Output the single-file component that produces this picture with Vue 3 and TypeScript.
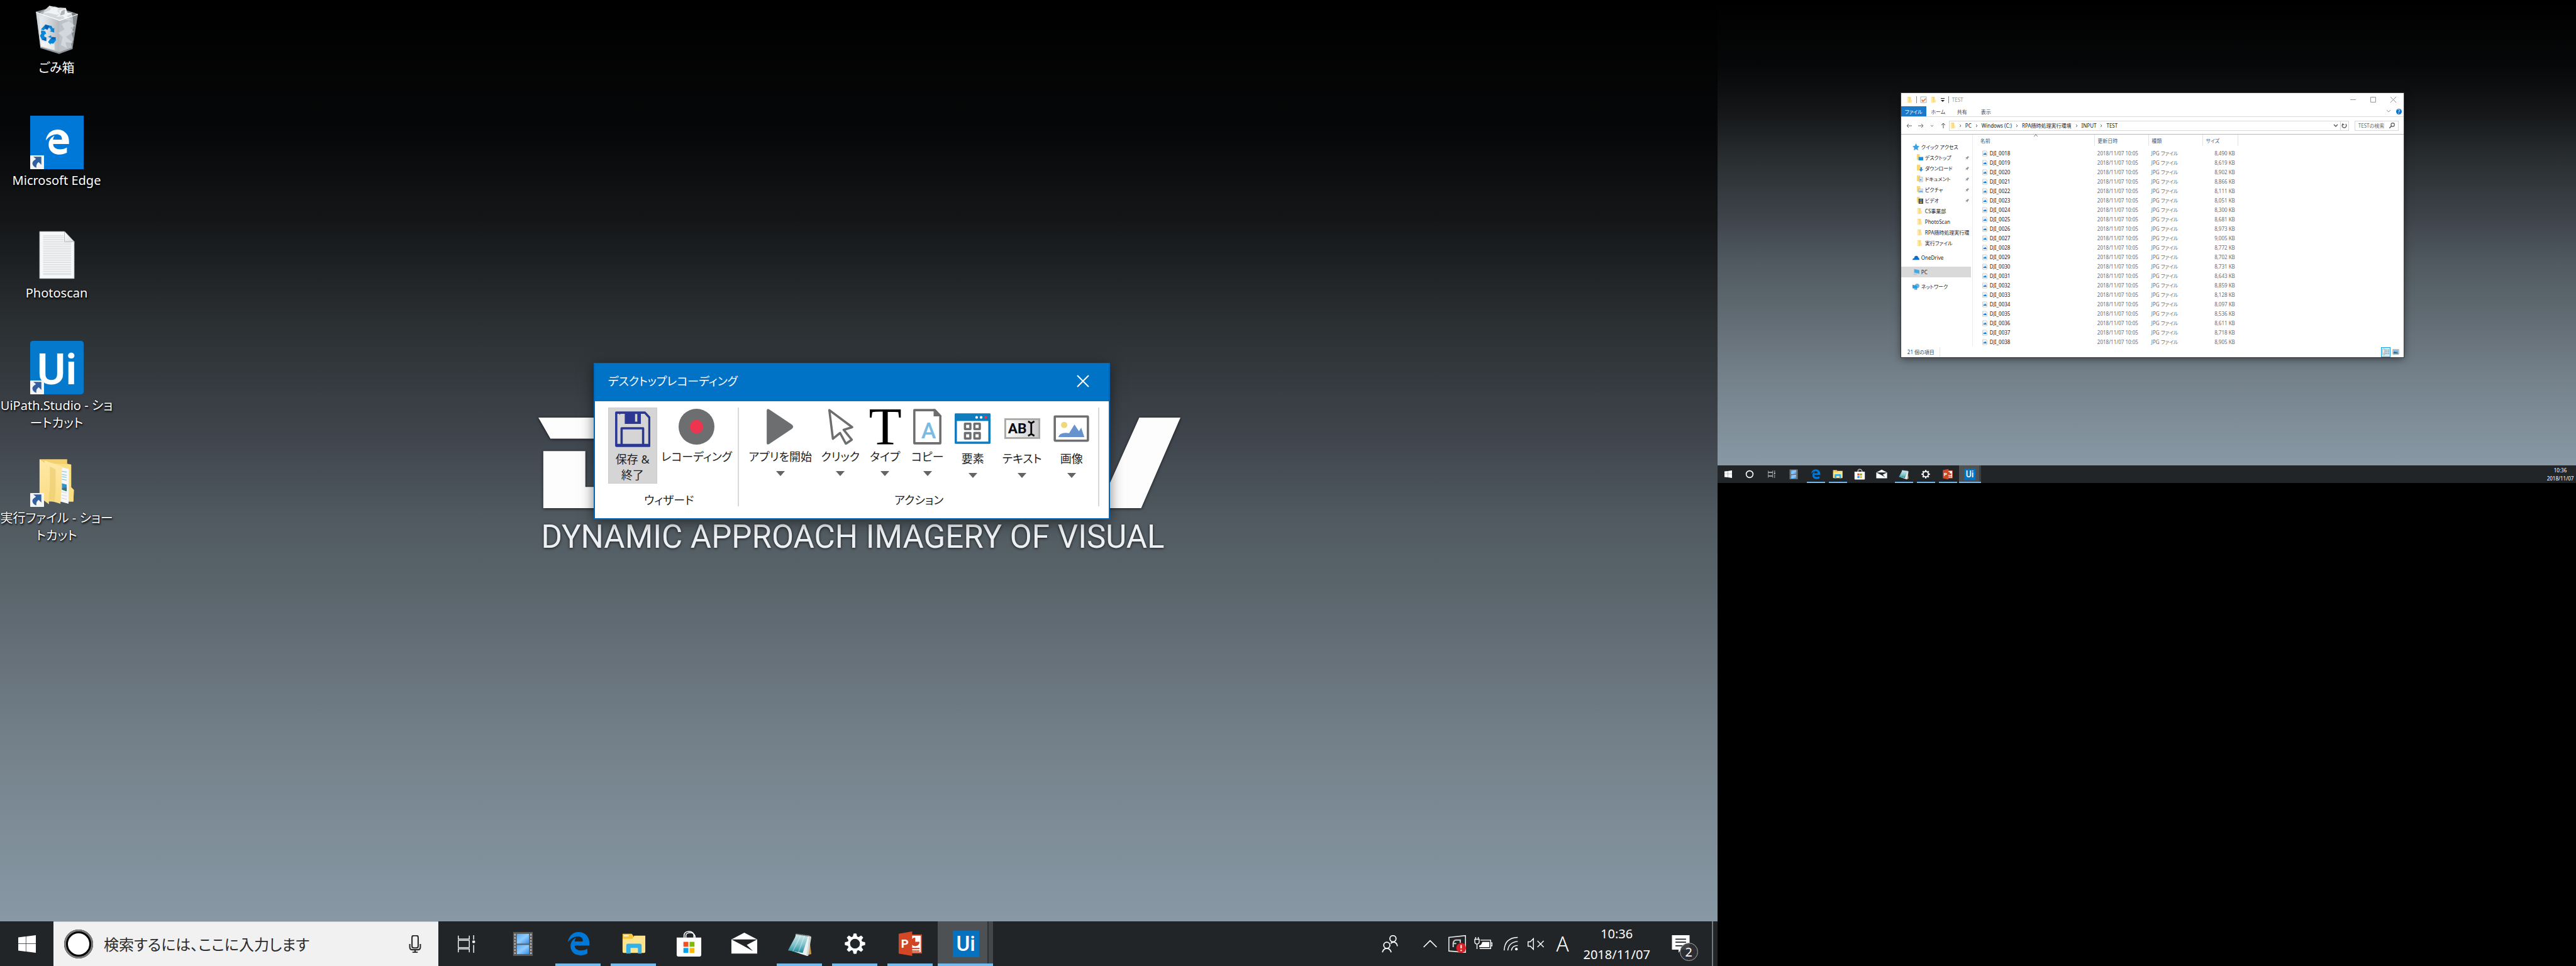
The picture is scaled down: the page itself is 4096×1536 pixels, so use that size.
<script setup lang="ts">
interface Shortcut {
  icon: string
  lines: string[]
  linked: boolean
}

interface Task {
  icon: string
  name: string
  open?: boolean
  active?: boolean
}

interface Action {
  icon: string
  label: string
  low?: boolean
}

interface Place {
  icon: string
  label: string
  level: number
  pinned?: boolean
  gap?: boolean
  current?: boolean
}

interface Glyph {
  text: string
  x: number
  y: number
  size: number
  fill: string
  weight: number
  serif?: boolean
}

const shortcuts: Shortcut[] = [
  { icon: 'bin', lines: ['ごみ箱'], linked: false },
  { icon: 'edge-tile', lines: ['Microsoft Edge'], linked: true },
  { icon: 'textfile', lines: ['Photoscan'], linked: false },
  { icon: 'ui-tile', lines: ['UiPath.Studio - ショ', 'ートカット'], linked: true },
  { icon: 'folder-open', lines: ['実行ファイル - ショー', 'トカット'], linked: true },
]

const tasks: Task[] = [
  { icon: 'film', name: 'ビデオ' },
  { icon: 'edge', name: 'Microsoft Edge', open: true },
  { icon: 'explorer', name: 'エクスプローラー', open: true },
  { icon: 'store', name: 'Microsoft Store' },
  { icon: 'mail', name: 'メール' },
  { icon: 'notepad', name: 'メモ帳', open: true },
  { icon: 'gear', name: '設定', open: true },
  { icon: 'ppt', name: 'PowerPoint', open: true },
  { icon: 'ui', name: 'UiPath Studio', open: true, active: true },
]

const actions: Action[] = [
  { icon: 'r-play', label: 'アプリを開始' },
  { icon: 'r-cursor', label: 'クリック' },
  { icon: 'r-type', label: 'タイプ' },
  { icon: 'r-copy', label: 'コピー' },
  { icon: 'r-element', label: '要素', low: true },
  { icon: 'r-text', label: 'テキスト', low: true },
  { icon: 'r-image', label: '画像', low: true },
]

// Letters that sit on top of an icon's shapes, in the icon's own units.
const glyphs: Record<string, Glyph> = {
  'ui-tile': { text: 'Ui', x: 60, y: 97, size: 98, fill: '#fff', weight: 600 },
  ui: { text: 'Ui', x: 22, y: 34, size: 34, fill: '#fff', weight: 500 },
  ppt: { text: 'P', x: 13, y: 29, size: 19, fill: '#fff', weight: 700 },
  'r-type': { text: 'T', x: 40, y: 80, size: 120, fill: '#000', weight: 400, serif: true },
  'r-copy': { text: 'A', x: 43, y: 66, size: 50, fill: '#79bbe2', weight: 500 },
  'r-text': { text: 'AB', x: 29, y: 51, size: 32, fill: '#0b0b0b', weight: 700 },
}

const places: Place[] = [
  { icon: 'p-star', label: 'クイック アクセス', level: 1 },
  { icon: 'p-desktop', label: 'デスクトップ', level: 2, pinned: true },
  { icon: 'p-download', label: 'ダウンロード', level: 2, pinned: true },
  { icon: 'p-document', label: 'ドキュメント', level: 2, pinned: true },
  { icon: 'p-picture', label: 'ピクチャ', level: 2, pinned: true },
  { icon: 'p-video', label: 'ビデオ', level: 2, pinned: true },
  { icon: 'p-folder', label: 'CS事業部', level: 2 },
  { icon: 'p-folder', label: 'PhotoScan', level: 2 },
  { icon: 'p-folder', label: 'RPA随時処理実行環', level: 2 },
  { icon: 'p-folder', label: '実行ファイル', level: 2 },
  { icon: 'p-cloud', label: 'OneDrive', level: 1, gap: true },
  { icon: 'p-pc', label: 'PC', level: 1, gap: true, current: true },
  { icon: 'p-network', label: 'ネットワーク', level: 1, gap: true },
]

const crumbs: string[] = ['PC', 'Windows (C:)', 'RPA随時処理実行環境', 'INPUT', 'TEST']

const sizes: number[] = [
  8490, 8619, 8902, 8866, 8111, 8051, 8300, 8681, 8973, 9005, 8772,
  8702, 8731, 8643, 8859, 8128, 8097, 8536, 8611, 8718, 8905,
]

const files = sizes.map((size, i) => ({
  name: `DJI_${String(i + 18).padStart(4, '0')}`,
  date: '2018/11/07 10:05',
  type: 'JPG ファイル',
  size: `${size.toLocaleString('en-US')} KB`,
}))

const teeth: number[] = [0, 45, 90, 135, 180, 225, 270, 315]
const ruled: number[] = [17, 21, 25, 29, 33, 37, 41, 45, 49, 53, 57, 61, 65, 69, 73, 77, 81, 85, 89, 93, 97, 101, 104]
const perforations: number[] = [6, 11, 16, 21, 26, 31, 36]
</script>

<template>
  <svg class="defs" aria-hidden="true">
    <defs>
      <linearGradient id="g-bin" x1="0" x2="1"><stop offset="0" stop-color="#f4f6f8" /><stop offset=".45" stop-color="#dfe3e7" /><stop offset="1" stop-color="#a9aeb3" /></linearGradient>
      <linearGradient id="g-folder" x1="0" y1="0" x2="0" y2="1"><stop offset="0" stop-color="#ffe9a6" /><stop offset="1" stop-color="#fbdc84" /></linearGradient>
      <linearGradient id="g-film" x1="0" y1="0" x2="1" y2="1"><stop offset="0" stop-color="#5da9ee" /><stop offset=".5" stop-color="#8ecbff" /><stop offset="1" stop-color="#3a8be0" /></linearGradient>
      <linearGradient id="g-note" x1="0" y1="0" x2="0" y2="1"><stop offset="0" stop-color="#cfe9ec" /><stop offset=".55" stop-color="#7fc3cb" /><stop offset="1" stop-color="#1f8798" /></linearGradient>
      <linearGradient id="g-box" x1="0" x2="1"><stop offset="0" stop-color="#ffffff" /><stop offset="1" stop-color="#c9c7cb" /></linearGradient>
      <linearGradient id="g-page" x1="0" y1="0" x2="1" y2="1"><stop offset="0" stop-color="#ffffff" /><stop offset="1" stop-color="#dcdcde" /></linearGradient>
    </defs>

    <symbol id="edge" viewBox="0 0 44 44">
      <svg x="3" y="2" width="39" height="40" viewBox="0 0 512 512">
        <path fill="#0078d7" d="M25.714 228.163c.111-.162.23-.323.342-.485-.021.162-.045.323-.065.485h-.277zm460.572 15.508c0-44.032-7.754-84.465-28.801-122.405C416.498 47.879 343.912 8.001 258.893 8.001 118.962 7.724 40.617 113.214 26.056 227.679c42.429-61.312 117.073-121.376 220.375-124.966 0 0 109.666 0 99.419 104.957H169.997c6.369-37.386 18.554-58.986 34.339-78.926-75.048 34.893-121.85 96.096-120.742 188.315.83 71.448 50.124 144.836 120.743 171.976 83.357 31.847 192.776 7.2 240.132-21.324V363.307c-80.864 56.494-270.871 60.925-272.255-67.572h314.073v-52.064z" />
      </svg>
    </symbol>
    <symbol id="edge-tile" viewBox="0 0 120 120">
      <rect width="120" height="120" fill="#0078d7" />
      <svg x="32" y="30" width="58" height="58" viewBox="0 0 512 512">
        <path fill="#fff" d="M25.714 228.163c.111-.162.23-.323.342-.485-.021.162-.045.323-.065.485h-.277zm460.572 15.508c0-44.032-7.754-84.465-28.801-122.405C416.498 47.879 343.912 8.001 258.893 8.001 118.962 7.724 40.617 113.214 26.056 227.679c42.429-61.312 117.073-121.376 220.375-124.966 0 0 109.666 0 99.419 104.957H169.997c6.369-37.386 18.554-58.986 34.339-78.926-75.048 34.893-121.85 96.096-120.742 188.315.83 71.448 50.124 144.836 120.743 171.976 83.357 31.847 192.776 7.2 240.132-21.324V363.307c-80.864 56.494-270.871 60.925-272.255-67.572h314.073v-52.064z" />
      </svg>
    </symbol>
    <symbol id="bin" viewBox="0 0 120 120">
      <path d="M13 20 55 8l52 17-12 77-30 11-42-13z" fill="#74787c" />
      <path d="M21 24 33 15l10-9 8 4 7 2 9-2 13 1 3 9 11 5 2 11 1 20-5 9 5 16-5 11 2 9-8 4-20 7-42-15-3-32z" fill="#d3d8dc" />
      <path d="m43 6 3 9-18 8 13-1 18 4 10-2-9-6 12-4-10-4zM80 11l3 10 13 1-14 7 12 10-13-1-8-9-14 2 8-9-6-8z" fill="#f1f3f4" />
      <path d="m70 18 8-4-1 11-10 3zM23 20l10-5-6 13-9 7z" fill="#aeb5ba" />
      <path d="M13 20 66 39l-1 74-42-13z" fill="url(#g-bin)" opacity=".78" />
      <path d="m66 39 41-14-12 77-30 11z" fill="#9ea6ab" opacity=".42" />
      <path d="m87 40 14 11-11 4 8 9-18 12 16 13-17-1 4 13-14-7 4-18-10-9 14-8-6-12z" fill="#e2e6e9" opacity=".6" />
      <path d="m25 84 9 4 8-9 4 13 8-5 1 18-30-9z" fill="#fff" opacity=".6" />
      <path d="m13 20 53 19 41-14" fill="none" stroke="#fff" stroke-width="1.5" />
      <path d="M13 20 55 8l52 17" fill="none" stroke="#c0c4c8" stroke-width="1" />
      <path d="m23 98 42 12 30-11v4l-30 11-42-13z" fill="#8c9298" />
      <path d="m34 48 14 3 3 6 3-2v11l-10-3 3-2-3-5-9-2-4 7-7-2zM25 61l9 2 2 7-3-1-2 5 5 3v8l-10-3-4-9 3-5-1-3zM40 76l7-4v3l10 3 1 5-6 8-6-1v3l-6-6 7-9z" fill="#0a86d8" />
      <path d="m34 48 9 3-4 9-7-3zM36 77v8l-10-3zM50 76l8 1-3 5-8-1z" fill="#0563b7" />
    </symbol>
    <symbol id="textfile" viewBox="0 0 120 120">
      <path d="M21 7h56l22 23v83H21z" fill="#f7f8f9" stroke="#82878b" stroke-width="1" />
      <path v-for="y in ruled" :key="y" :d="y < 30 ? `M29 ${y}h46` : `M29 ${y}h63`" stroke="#c9cccf" stroke-width="1.2" />
      <path d="M77 7v23h22z" fill="url(#g-page)" stroke="#9a9ea2" stroke-width="1" />
    </symbol>
    <symbol id="ui-tile" viewBox="0 0 120 120">
      <rect width="120" height="120" rx="6" fill="#0579cc" />
    </symbol>
    <symbol id="folder-open" viewBox="0 0 120 120">
      <path d="M21 13h62v10l9 2v51l6 6-1 26H40z" fill="#f3d070" />
      <path d="M44 22 92 25v51l6 6-1 26H86z" fill="#fbdf85" />
      <path d="m71 31 16 4-1 78-18-5z" fill="#f5f7f8" />
      <path d="m71 40 11 2m-11 5 11 2m-11 3 11 2m-11 4 11 2" stroke="#78bce0" stroke-width="1.5" />
      <path d="m71 67 11 3v15l-11-4z" fill="#2f92cd" />
      <path d="m71 78 11-2v9l-11-4z" fill="#3f7277" />
      <path d="m70 86 12 3m-12 4 12 3m-12 4 12 3" stroke="#bfc4c8" stroke-width="1" />
      <path d="m32 16 39 13v53l-2 4-1 27-26-8z" fill="url(#g-folder)" />
      <path d="m44 29 13 7v47l-2 24-13-3z" fill="#eccd72" opacity=".7" />
      <path d="m21 13 23 17v54l-2 3v27L21 98z" fill="url(#g-folder)" />
    </symbol>
    <symbol id="link-arrow" viewBox="0 0 31 31">
      <rect width="31" height="31" rx="1" fill="#f4f4f5" />
      <path d="M7 3h18v18l-6-6c-4 3-6 6-5 13-6-2-9-6-9-10 0-5 4-7 8-10z" fill="#33609f" />
    </symbol>

    <symbol id="win" viewBox="0 0 40 40">
      <path d="m0 5 17-2v16H0zM18 3l22-3v19H18zM0 20h17v17L0 35zM18 20h22v20l-22-3z" fill="#fff" />
    </symbol>
    <symbol id="ring" viewBox="0 0 44 44"><circle cx="22" cy="22" r="17" fill="none" stroke="#fff" stroke-width="5" /></symbol>
    <symbol id="taskview" viewBox="0 0 40 40">
      <path d="M1 1v8h25V1M1 39v-8h25v8M1 12h25v16H1zM36 0v10M36 22v18" fill="none" stroke="#fff" stroke-width="2" />
      <rect x="33" y="12" width="6" height="6" rx="2" fill="#fff" />
    </symbol>
    <symbol id="film" viewBox="0 0 44 44">
      <rect x="6" y="3" width="32" height="39" fill="#5a5a5a" />
      <rect x="12" y="6" width="20" height="16" fill="url(#g-film)" /><rect x="12" y="24" width="20" height="15" fill="url(#g-film)" />
      <path v-for="y in perforations" :key="y" :d="`M8 ${y}h2v3h-2zM34 ${y}h2v3h-2z`" fill="#c8c8c8" />
    </symbol>
    <symbol id="explorer" viewBox="0 0 44 44">
      <path d="M4 6h15l3 4v5H4z" fill="#f9c63a" /><path d="M6 8h8v2H6z" fill="#fff" />
      <path d="M4 14h16l3-5h18v26q0 2-2 2H6q-2 0-2-2z" fill="#ffe48f" />
      <path d="M10 37V25q0-3 3-3h19q3 0 3 3v13h-6v-9H17v9h-7z" fill="#35b1ea" />
    </symbol>
    <symbol id="store" viewBox="0 0 44 44">
      <path d="M14 13V8q1-6 8-6t8 6v5M17 13V8q1-4 7-4t8 6v3" fill="none" stroke="#fff" stroke-width="1.6" />
      <path d="M2 12h40v28q0 3-3 3H5q-3 0-3-3z" fill="#fff" />
      <path d="M13 19h8v8h-8z" fill="#f25022" /><path d="M23 19h8v8h-8z" fill="#7fba00" /><path d="M13 29h8v8h-8z" fill="#00a4ef" /><path d="M23 29h8v8h-8z" fill="#ffb900" />
    </symbol>
    <symbol id="mail" viewBox="0 0 44 44">
      <path d="M1 15 22 4l21 11v23H1z" fill="#fff" />
      <path d="M1 15h42L26 24l10 10-18-10z" fill="#212528" />
    </symbol>
    <symbol id="notepad" viewBox="0 0 44 44">
      <path d="m37 8 4 31-8 2-4-9z" fill="#c99a45" />
      <path d="m16 6 22 3-4 33-24-8z" fill="#eef1f2" /><path d="m38 9 3 2-5 31-3 0z" fill="#cfd4d6" />
      <path d="M17 7 36 9l-9 28L3 33z" fill="url(#g-note)" />
      <path d="m24 8-13 26M30 9 20 36" stroke="#fff" stroke-width="1.4" opacity=".4" />
      <path d="m17 6 21 3" stroke="#3b3f40" stroke-width="3" stroke-dasharray="1 1" />
    </symbol>
    <symbol id="gear" viewBox="0 0 44 44">
      <circle cx="22" cy="22" r="10" fill="none" stroke="#fff" stroke-width="4" />
      <path v-for="a in teeth" :key="a" d="M19 11l1-5h4l1 5z" :transform="`rotate(${a} 22 22)`" fill="#fff" stroke="#fff" stroke-width="1" />
    </symbol>
    <symbol id="ppt" viewBox="0 0 44 44">
      <rect x="22" y="8" width="18" height="29" fill="#fff" stroke="#d04423" stroke-width="2" />
      <path d="M30 12v7h7a7 7 0 1 1-7-7zM24 29h13v2H24zM24 33h13v2H24z" fill="#d04423" />
      <path d="m3 6 22-4v40L3 38z" fill="#d24726" />
    </symbol>
    <symbol id="ui" viewBox="0 0 44 44">
      <rect x="1" y="1" width="43" height="43" rx="1" fill="#0672bf" />
    </symbol>

    <symbol id="r-save" viewBox="0 0 80 80">
      <path d="M4 3h64l10 11v63H4z" fill="none" stroke="#2a3893" stroke-width="5" stroke-linejoin="round" />
      <path d="M23 2h36v26H23zM46 6v17h5V6z" fill="#2a3893" fill-rule="evenodd" />
      <path d="M16 77V38h48v39" fill="none" stroke="#2a3893" stroke-width="5" stroke-linejoin="round" /><path d="M3 75h75" stroke="#2a3893" stroke-width="5" /><path d="m11 3 5 0-5 5z" fill="#2a3893" />
    </symbol>
    <symbol id="r-record" viewBox="0 0 80 80"><circle cx="40" cy="40" r="40" fill="#6d6e70" /><circle cx="40" cy="40" r="15" fill="#ee3550" /></symbol>
    <symbol id="r-play" viewBox="0 0 80 80"><path d="M10 4q0-5 5 -3l51 34q6 5 0 10L15 79q-5 2-5-3z" fill="#6d6e70" /></symbol>
    <symbol id="r-cursor" viewBox="0 0 80 80"><path d="m15 3 51 38-19 6 18 22-13 9-13-24-16 13z" fill="#fff" stroke="#6d6e70" stroke-width="5" stroke-linejoin="round" /></symbol>
    <symbol id="r-copy" viewBox="0 0 80 80">
      <path d="M11 3h46l12 13v61H11z" fill="#fff" stroke="#6d6e70" stroke-width="5" stroke-linejoin="round" /><path d="M55 1v15h15z" fill="#6d6e70" stroke="#6d6e70" stroke-width="2" />
    </symbol>
    <symbol id="r-element" viewBox="0 0 80 80">
      <rect y="6" width="80" height="68" rx="2" fill="#0f7dbd" /><rect x="5" y="23" width="70" height="46" fill="#fff" />
      <circle cx="49" cy="15" r="3" fill="#fff" /><circle cx="59" cy="15" r="3" fill="#fff" /><circle cx="69" cy="15" r="3" fill="#ee3550" />
      <path d="M23 29h12v12H23zM44 29h12v12H44zM23 50h12v12H23zM44 50h12v12H44z" fill="none" stroke="#6d6e70" stroke-width="5" stroke-linejoin="round" />
    </symbol>
    <symbol id="r-text" viewBox="0 0 80 80">
      <rect x="2" y="19" width="76" height="42" fill="url(#g-box)" stroke="#a9aaa2" stroke-width="4" />
      <path d="m53 24 7 4 7-4M60 28v24M53 56l7-4 7 4" fill="none" stroke="#0b0b0b" stroke-width="4" />
    </symbol>
    <symbol id="r-image" viewBox="0 0 80 80">
      <rect x="3" y="13" width="74" height="54" rx="1" fill="#fff" stroke="#6d6e70" stroke-width="5" />
      <circle cx="24" cy="32" r="7" fill="#efd978" /><path d="M11 59q3-12 24-9l12-19 10 15 5-8 7 21z" fill="#6693cd" />
    </symbol>

    <symbol id="p-folder" viewBox="0 0 12 12"><path d="M2 1h6v10H2z" fill="#f8d775" /><path d="M2 1l3 2v9L2 11zM7 6h3v5H7z" fill="#ffe8a4" /></symbol>
    <symbol id="p-desktop" viewBox="0 0 12 12"><path d="M1 0h5v10H1z" fill="#f8d775" /><path d="M4 5h8v6H4z" fill="#1593e2" /></symbol>
    <symbol id="p-download" viewBox="0 0 12 12"><path d="M1 0h6v10H1z" fill="#f8d775" /><path d="M7 4h3v4h2l-4 4-3-4h2z" fill="#2f8fdf" /></symbol>
    <symbol id="p-document" viewBox="0 0 12 12"><path d="M1 0h6v10H1z" fill="#f8d775" /><path d="M5 3h6v8H5z" fill="#e8eef2" stroke="#93a5b2" stroke-width=".7" /><path d="M6 6h3v3H6z" fill="#78a9cc" /></symbol>
    <symbol id="p-picture" viewBox="0 0 12 12"><path d="M1 0h6v10H1z" fill="#f8d775" /><path d="M4 5h8v6H4z" fill="#dfeefa" stroke="#93a5b2" stroke-width=".7" /><path d="M5 8h6v2H5z" fill="#5da5dc" /></symbol>
    <symbol id="p-video" viewBox="0 0 12 12"><path d="M1 0h5v10H1z" fill="#f8d775" /><path d="M4 3h8v9H4z" fill="#454a50" /><path d="M6 4h4v3H6z" fill="#4b8bc4" /><path d="M6 8h4v3H6z" fill="#c08b3e" /></symbol>
    <symbol id="p-star" viewBox="0 0 12 12"><path d="m6 0 2 4 4 1-3 3 1 4-4-2-4 2 1-4-3-3 4-1z" fill="#3aa0e8" /></symbol>
    <symbol id="p-cloud" viewBox="0 0 12 12"><path d="M0 10q0-3 3-3 0-4 4-4 2 0 3 3 2 1 2 4z" fill="#0a6fc9" /></symbol>
    <symbol id="p-pc" viewBox="0 0 12 12"><path d="m3 1 9 2v6L3 7z" fill="#3ba9ea" stroke="#8fb5cc" stroke-width=".6" /><path d="m0 9 6-1 3 2-5 2z" fill="#c3cbd1" /></symbol>
    <symbol id="p-network" viewBox="0 0 12 12"><circle cx="8" cy="5" r="4" fill="#6db4df" /><path d="m0 3 8 2v6L0 9z" fill="#2c9be2" /><path d="M3 11h5v1H3z" fill="#8a98a3" /></symbol>
    <symbol id="p-pin" viewBox="0 0 12 12"><path d="m7 1 4 4-2 0-2 3 0 2-2-2-4 3 3-4-2-2h2l3-2z" fill="#86929c" /></symbol>
    <symbol id="p-jpg" viewBox="0 0 12 14"><path d="M1 1h8l2 2v10H1z" fill="#fff" stroke="#a4a8ab" stroke-width=".9" /><path d="M2 4h8v6H2z" fill="#d8ebfa" /><path d="m2 10 2-3 1 1 2-3 2 3 1 0v2z" fill="#0f76cf" /></symbol>
  </svg>

  <main class="desktops">
    <section class="screen primary">
      <div class="wallpaper">
        <div class="brand">
          <svg class="brand-mark" viewBox="0 0 1435 203" aria-hidden="true">
            <path d="M0 0h180v47H27zM11 75h94v80h60v48H11zM1343 0h92l-88 203h-95z" fill="#fdfdfd" />
          </svg>
          <p class="brand-name">DYNAMIC APPROACH IMAGERY OF VISUAL</p>
        </div>

        <nav class="shortcuts">
          <button v-for="s in shortcuts" :key="s.icon" type="button" class="shortcut">
            <span class="tile">
              <svg class="tile-icon" viewBox="0 0 120 120" aria-hidden="true">
                <use :href="`#${s.icon}`" width="120" height="120" />
                <text v-if="glyphs[s.icon]" class="glyph" :x="glyphs[s.icon].x" :y="glyphs[s.icon].y" :font-size="glyphs[s.icon].size" :font-weight="glyphs[s.icon].weight" :fill="glyphs[s.icon].fill">{{ glyphs[s.icon].text }}</text>
              </svg>
              <svg v-if="s.linked" class="link-arrow" aria-hidden="true"><use href="#link-arrow" /></svg>
            </span>
            <span v-for="line in s.lines" :key="line" class="shortcut-line">{{ line }}</span>
          </button>
        </nav>

        <section class="recorder" role="dialog" aria-label="デスクトップレコーディング">
          <header class="recorder-title">
            <h1>デスクトップレコーディング</h1>
            <button type="button" class="recorder-close" aria-label="閉じる">
              <svg viewBox="0 0 20 20" aria-hidden="true"><path d="M1 1l18 18M19 1 1 19" stroke="#fff" stroke-width="2" /></svg>
            </button>
          </header>
          <div class="ribbon">
            <div class="group wizard">
              <div class="group-row">
                <button type="button" class="rb save">
                  <svg aria-hidden="true"><use href="#r-save" /></svg>
                  <span>保存 &amp;<br>終了</span>
                </button>
                <button type="button" class="rb record">
                  <svg aria-hidden="true"><use href="#r-record" /></svg>
                  <span>レコーディング</span>
                </button>
              </div>
              <p class="group-name">ウィザード</p>
            </div>
            <div class="group acts">
              <div class="group-row">
                <button v-for="a in actions" :key="a.icon" type="button" class="rb" :class="{ low: a.low }">
                  <svg viewBox="0 0 80 80" aria-hidden="true">
                    <use :href="`#${a.icon}`" width="80" height="80" />
                    <text v-if="glyphs[a.icon]" class="glyph" :class="{ serif: glyphs[a.icon].serif }" :x="glyphs[a.icon].x" :y="glyphs[a.icon].y" :font-size="glyphs[a.icon].size" :font-weight="glyphs[a.icon].weight" :fill="glyphs[a.icon].fill">{{ glyphs[a.icon].text }}</text>
                  </svg>
                  <span>{{ a.label }}</span>
                  <i class="caret"></i>
                </button>
              </div>
              <p class="group-name">アクション</p>
            </div>
          </div>
        </section>
      </div>

      <footer class="taskbar">
        <button type="button" class="tb start" aria-label="スタート"><svg class="i-win"><use href="#win" /></svg></button>
        <label class="cortana">
          <span class="cortana-ring"></span>
          <input type="text" aria-label="検索" placeholder="検索するには、ここに入力します">
          <svg class="mic" viewBox="0 0 28 40" aria-hidden="true">
            <rect x="7" y="1" width="14" height="28" rx="4" fill="none" stroke="#2b2b2b" stroke-width="3" />
            <path d="M2 20v7q0 6 6 6h12q6 0 6-6v-7M14 33v6M8 39h12" fill="none" stroke="#2b2b2b" stroke-width="3" />
          </svg>
        </label>
        <button type="button" class="tb view" aria-label="タスク ビュー"><svg class="i-view"><use href="#taskview" /></svg></button>
        <button v-for="t in tasks" :key="t.icon" type="button" class="tb task" :class="{ open: t.open, active: t.active }" :aria-label="t.name">
          <svg viewBox="0 0 44 44">
            <use :href="`#${t.icon}`" width="44" height="44" />
            <text v-if="glyphs[t.icon]" class="glyph" :x="glyphs[t.icon].x" :y="glyphs[t.icon].y" :font-size="glyphs[t.icon].size" :font-weight="glyphs[t.icon].weight" :fill="glyphs[t.icon].fill">{{ glyphs[t.icon].text }}</text>
          </svg>
        </button>
        <div class="tray">
          <button type="button" class="tb t-people" aria-label="People">
            <svg viewBox="0 0 36 40" width="26" height="28"><g fill="none" stroke="#fff" stroke-width="2.5"><circle cx="25" cy="8" r="7" /><path d="M20 19q2-3 6-3 8 0 9 9" /><circle cx="11" cy="23" r="7" /><path d="M1 39q2-9 10-9 8 0 10 9" /></g></svg>
          </button>
          <button type="button" class="tb t-up" aria-label="隠れているインジケーター">
            <svg viewBox="0 0 32 18" width="22" height="13"><path d="M1 17 16 2l15 15" fill="none" stroke="#fff" stroke-width="2.5" /></svg>
          </button>
          <button type="button" class="tb t-dev" aria-label="グラフィックス">
            <svg viewBox="0 0 40 40" width="28" height="28"><path d="m1 5 38-4v38L1 36z" fill="#212528" stroke="#e8e8e8" stroke-width="2.5" /><path d="M11 18q1-7 7-7h9v6M11 27v-8h7" fill="none" stroke="#c9c9c9" stroke-width="3" /><circle cx="29" cy="29" r="11" fill="#da1f26" /><path d="M29 22v8M29 33v3" stroke="#fff" stroke-width="3" /></svg>
          </button>
          <button type="button" class="tb t-bat" aria-label="バッテリ">
            <svg viewBox="0 0 42 30" width="30" height="21"><path d="M3 0v5M9 0v5" stroke="#fff" stroke-width="2" /><path d="M1 5h10v6q0 4-5 5-5-1-5-5zM6 16v11M14 7h23v19H12M37 13h3v7h-3" fill="none" stroke="#fff" stroke-width="2" /><path d="M18 11h16v12H11v-4q5 0 7-8z" fill="#fff" /></svg>
          </button>
          <button type="button" class="tb t-wifi" aria-label="ネットワーク">
            <svg viewBox="0 0 32 32" width="23" height="23"><path d="M1 31Q2 3 31 2M9 31Q11 13 31 11M17 31q2-11 14-11" fill="none" stroke="#fff" stroke-width="2" /><circle cx="28" cy="28" r="3" fill="#fff" /></svg>
          </button>
          <button type="button" class="tb t-vol" aria-label="ミュート">
            <svg viewBox="0 0 38 28" width="27" height="20"><path d="M1 9h5l7-7v24l-7-7H1zM22 7l14 14M36 7 22 21" fill="none" stroke="#fff" stroke-width="2" /></svg>
          </button>
          <button type="button" class="tb t-ime">A</button>
          <button type="button" class="tb clock"><span>10:36</span><span>2018/11/07</span></button>
          <button type="button" class="tb t-note" aria-label="通知">
            <svg viewBox="0 0 40 40" width="29" height="28"><path d="M0 0h40v33H20l-5 7v-7H0z" fill="#fff" /><path d="M8 9h24M8 16h24M8 24h16" stroke="#212528" stroke-width="2.5" /></svg>
            <span class="badge">2</span>
          </button>
        </div>
      </footer>
    </section>

    <section class="screen secondary">
      <div class="wallpaper">
        <section class="explorer">
          <header class="ex-title">
            <svg class="pi"><use href="#p-folder" /></svg>
            <span class="bar"></span>
            <svg class="pi" viewBox="0 0 12 12"><path d="M1 1h10v10H1z" fill="#fafafa" stroke="#999" stroke-width=".8" /><path d="m3 6 2 3 5-5" fill="none" stroke="#e8702a" stroke-width="1.6" /></svg>
            <svg class="pi"><use href="#p-folder" /></svg>
            <svg class="qa" viewBox="0 0 8 8"><path d="M1 1h6v1H1zM1 4h6L4 7z" fill="#222" /></svg>
            <span class="bar"></span>
            <h2>TEST</h2>
            <div class="win-controls">
              <button type="button" aria-label="最小化"><svg viewBox="0 0 8 8"><path d="M0 4h8" stroke="#888" stroke-width=".8" /></svg></button>
              <button type="button" aria-label="最大化"><svg viewBox="0 0 8 8"><path d="M.5.5h7v7h-7z" fill="none" stroke="#888" stroke-width=".8" /></svg></button>
              <button type="button" aria-label="閉じる"><svg viewBox="0 0 8 8"><path d="m0 0 8 8M8 0 0 8" stroke="#888" stroke-width=".8" /></svg></button>
            </div>
          </header>
          <nav class="ex-tabs">
            <button type="button" class="on">ファイル</button>
            <button type="button">ホーム</button>
            <button type="button">共有</button>
            <button type="button">表示</button>
            <svg class="chev" viewBox="0 0 8 8"><path d="m1 2 3 3 3-3" fill="none" stroke="#999" /></svg>
            <span class="help">?</span>
          </nav>
          <div class="ex-address">
            <div class="ex-arrows">
              <svg viewBox="0 0 10 10"><path d="M9 5H1M4 2 1 5l3 3" fill="none" stroke="#666" /></svg>
              <svg viewBox="0 0 10 10"><path d="M1 5h8M6 2l3 3-3 3" fill="none" stroke="#666" /></svg>
              <svg viewBox="0 0 10 10"><path d="m3 4 2 2 2-2" fill="none" stroke="#777" /></svg>
              <svg viewBox="0 0 10 10"><path d="M5 9V1M2 4l3-3 3 3" fill="none" stroke="#555" /></svg>
            </div>
            <div class="path">
              <svg class="pi"><use href="#p-folder" /></svg>
              <template v-for="c in crumbs" :key="c">
                <svg class="sep" viewBox="0 0 8 8"><path d="m3 2 2 2-2 2" fill="none" stroke="#666" /></svg>
                <a href="#">{{ c }}</a>
              </template>
              <svg class="path-open" viewBox="0 0 8 8"><path d="m1 2 3 3 3-3" fill="none" stroke="#555" stroke-width="1.4" /></svg>
              <button type="button" class="reload" aria-label="更新"><svg viewBox="0 0 8 8"><path d="M2 2a3 3 0 1 0 4 0M2 1v2h2" fill="none" stroke="#555" stroke-width="1.2" /></svg></button>
            </div>
            <label class="find">
              <input type="text" aria-label="フォルダー内の検索" placeholder="TESTの検索">
              <svg viewBox="0 0 8 8"><circle cx="5" cy="3" r="2.4" fill="none" stroke="#555" stroke-width="1" /><path d="M3 5 0 8" stroke="#555" stroke-width="1.3" /></svg>
            </label>
          </div>
          <div class="ex-body">
            <ul class="places">
              <li v-for="p in places" :key="p.label" :class="[`lv${p.level}`, { gap: p.gap, current: p.current }]">
                <svg class="pi"><use :href="`#${p.icon}`" /></svg>
                <span>{{ p.label }}</span>
                <svg v-if="p.pinned" class="pin"><use href="#p-pin" /></svg>
              </li>
            </ul>
            <div class="listing">
              <table>
                <colgroup><col class="c-name"><col class="c-date"><col class="c-type"><col class="c-size"></colgroup>
                <thead>
                  <tr>
                    <th scope="col" class="sorted">名前<svg viewBox="0 0 8 4"><path d="m1 3 3-3 3 3" fill="none" stroke="#777" /></svg></th>
                    <th scope="col">更新日時</th><th scope="col">種類</th><th scope="col">サイズ</th>
                  </tr>
                </thead>
                <tbody>
                  <tr v-for="f in files" :key="f.name">
                    <td class="f-name"><svg><use href="#p-jpg" /></svg>{{ f.name }}</td>
                    <td>{{ f.date }}</td>
                    <td>{{ f.type }}</td>
                    <td class="f-size">{{ f.size }}</td>
                  </tr>
                </tbody>
              </table>
            </div>
          </div>
          <footer class="ex-status">
            <span>21 個の項目</span>
            <div class="views">
              <button type="button" class="on" aria-label="詳細"><svg viewBox="0 0 12 12"><path d="M1 1h3v10H1z" fill="#fff" stroke="#888" stroke-width=".7" /><path d="M5 3h3M9 3h3M5 6h3M9 6h3M5 9h3M9 9h3" stroke="#666" stroke-width=".8" /><path d="M2 8h1v1H2z" fill="#d33" /></svg></button>
              <button type="button" aria-label="大アイコン"><svg viewBox="0 0 12 12"><path d="M1 2h10v8H1z" fill="#fff" stroke="#888" /><path d="M2 3h8v6H2z" fill="#6fb4e6" /><path d="m2 9 0-3q5 0 8 2v1z" fill="#2f6a76" /></svg></button>
            </div>
          </footer>
        </section>
      </div>
      <footer class="taskbar small">
        <button type="button" class="tb start" aria-label="スタート"><svg class="i-win"><use href="#win" /></svg></button>
        <button type="button" class="tb start" aria-label="Cortana"><svg class="i-ring"><use href="#ring" /></svg></button>
        <button type="button" class="tb view" aria-label="タスク ビュー"><svg class="i-view"><use href="#taskview" /></svg></button>
        <button v-for="t in tasks" :key="t.icon" type="button" class="tb task" :class="{ open: t.open, active: t.active }" :aria-label="t.name">
          <svg viewBox="0 0 44 44">
            <use :href="`#${t.icon}`" width="44" height="44" />
            <text v-if="glyphs[t.icon]" class="glyph" :x="glyphs[t.icon].x" :y="glyphs[t.icon].y" :font-size="glyphs[t.icon].size" :font-weight="glyphs[t.icon].weight" :fill="glyphs[t.icon].fill">{{ glyphs[t.icon].text }}</text>
          </svg>
        </button>
        <div class="tray">
          <button type="button" class="tb clock"><span>10:36</span><span>2018/11/07</span></button>
        </div>
      </footer>
    </section>
  </main>
</template>

<style>
body {
  background: #000;
}
</style>

<style scoped>
.defs {
  position: absolute;
  width: 0;
  height: 0;
}

.desktops {
  display: grid;
  grid-template-columns: 2fr 1fr;
  min-height: 100vh;
  background: #000;
  color: #fff;
  font-family: "Noto Sans", "Noto Sans CJK JP", sans-serif;
  font-feature-settings: "palt";
  overflow: hidden;
}

.desktops *,
.desktops *::before,
.desktops *::after {
  box-sizing: border-box;
}

button,
input {
  border: 0;
  padding: 0;
  margin: 0;
  background: none;
  color: inherit;
  font: inherit;
  font-feature-settings: inherit;
  border-radius: 0;
}

h1,
h2,
p,
ul {
  margin: 0;
  padding: 0;
  font-weight: 400;
  list-style: none;
}

svg {
  display: block;
  flex: none;
}

.glyph {
  font-family: Roboto, sans-serif;
  text-anchor: middle;
  text-shadow: none;
}

.glyph.serif {
  font-family: "Liberation Serif", serif;
}

.screen {
  display: flex;
  flex-direction: column;
  height: 100vh;
  min-width: 0;
}

.secondary {
  height: 50vh;
}

.wallpaper {
  position: relative;
  flex: 1;
  min-height: 0;
  background: linear-gradient(#000 0%, #060708 14%, #141618 24%, #272b2d 33%, #30373a 39%, #3f444c 47%, #4f595f 56%, #616b73 68%, #74818b 81%, #8899a5 100%);
}

/* wallpaper emblem */
.brand {
  position: absolute;
  left: 31.33%;
  top: 664px;
  width: 1021px;
  filter: drop-shadow(0 1px 2px rgba(0, 0, 0, .7));
}

.brand-mark {
  width: 100%;
}

.brand-name {
  padding: 16px 0 0 5px;
  font-family: Roboto, sans-serif;
  font-size: 51px;
  line-height: 60px;
  color: #eef1f4;
  white-space: nowrap;
}

/* desktop shortcuts */
.shortcuts {
  display: flex;
  flex-direction: column;
  width: 180px;
  padding-top: 5px;
}

.shortcut {
  display: flex;
  flex-direction: column;
  align-items: center;
  height: 179px;
  font-size: 20px;
  line-height: 28px;
  white-space: nowrap;
  text-shadow: 1px 2px 3px #000, 0 0 2px #000;
}

.tile {
  position: relative;
  width: 85px;
  height: 85px;
  margin-bottom: 4px;
}

.tile-icon {
  width: 85px;
  height: 85px;
}

.link-arrow {
  position: absolute;
  left: 0;
  bottom: 0;
  width: 22px;
  height: 22px;
}

/* recorder window */
.recorder {
  position: absolute;
  left: 34.56%;
  top: 577px;
  width: 821px;
  background: #fff;
  border: 2px solid #0067b8;
  border-top-width: 1px;
  color: #1e1e1e;
  font-size: 18px;
  line-height: 25px;
  box-shadow: 0 4px 20px rgba(0, 0, 0, .5);
}

.recorder-title {
  display: flex;
  justify-content: space-between;
  align-items: center;
  height: 60px;
  padding: 0 31px 4px 21px;
  background: #0173c7;
  color: #fff;
}

.recorder-title h1 {
  font-size: 18px;
}

.recorder-close svg {
  width: 20px;
  height: 20px;
}

.ribbon {
  display: flex;
  padding: 10px 15px 19px 21px;
}

.group {
  display: flex;
  flex-direction: column;
  justify-content: space-between;
  height: 157px;
  border-right: 2px solid #d8d8d8;
}

.group-row {
  display: flex;
}

.group-name {
  height: 22px;
  text-align: center;
  line-height: 24px;
}

.wizard {
  width: 208px;
}

.wizard .group-name {
  padding-right: 12px;
}

.acts {
  flex: 1;
}

.acts .group-name {
  padding-left: 2px;
}

.acts .group-row {
  display: grid;
  grid-template-columns: 112px 79px 63px 72px 72px 85px 72px;
  padding-left: 10px;
}

.rb {
  display: flex;
  flex-direction: column;
  align-items: center;
  padding-top: 2px;
  white-space: nowrap;
}

.rb svg {
  width: 57px;
  height: 57px;
  margin-bottom: 7px;
}

.rb.low {
  padding-top: 5px;
}

.rb.save {
  width: 78px;
  height: 121px;
  padding-top: 5px;
  background: #d5d5d5;
  border: 1px solid #cbcbcb;
}

.rb.record {
  margin-left: 10px;
  width: 106px;
}

.caret {
  margin-top: 10px;
  border: 7px solid transparent;
  border-top: 8px solid #646464;
  border-bottom: 0;
}

/* taskbars */
.taskbar {
  display: flex;
  flex: none;
  height: 71px;
  background: #212528;
}

.tb {
  position: relative;
  display: flex;
  align-items: center;
  justify-content: center;
  flex: none;
}

.start {
  width: 85px;
}

.i-win {
  width: 28px;
  height: 28px;
}

.cortana {
  display: flex;
  align-items: center;
  width: 612px;
  padding: 0 27px 0 17px;
  background: #f1f1f1;
  border-top: 1px solid #c4c4c4;
  color: #2b2b2b;
}

.cortana-ring {
  width: 46px;
  height: 46px;
  border: 6px solid #000;
  border-radius: 50%;
  outline: 3px solid #7a7a7a;
  outline-offset: -3px;
  background: #fff;
}

.cortana input {
  flex: 1;
  min-width: 0;
  padding-left: 17px;
  font-size: 24px;
  outline: 0;
}

.cortana input::placeholder {
  color: #2b2b2b;
  opacity: 1;
}

.mic {
  width: 20px;
  height: 28px;
}

.view {
  width: 90px;
}

.i-view {
  width: 28px;
  height: 28px;
}

.task {
  width: 88px;
}

.task svg {
  width: 43px;
  height: 43px;
}

.task.open::after {
  content: "";
  position: absolute;
  left: 8px;
  right: 8px;
  bottom: 0;
  height: 4px;
  background: #76b9ed;
}

.task.active {
  background: linear-gradient(to right, #4d5154 79px, #2d3134 79px, #2d3134 81px, #43474a 81px);
}

.task.active::after {
  left: 0;
  right: 0;
}

.tray {
  display: flex;
  margin-left: auto;
}

.t-people {
  width: 84px;
}

.t-up {
  width: 44px;
}

.t-dev {
  width: 42px;
}

.t-bat,
.t-wifi {
  width: 43px;
}

.t-vol {
  width: 38px;
}

.t-ime {
  width: 46px;
  font-size: 33px;
  font-weight: 300;
}

.clock {
  flex-direction: column;
  width: 126px;
  font-size: 20px;
  line-height: 33px;
}

.t-note {
  width: 90px;
  border-right: 2px solid #74787a;
  margin-right: 7px;
  padding-right: 11px;
}

.badge {
  position: absolute;
  right: 22px;
  bottom: 8px;
  width: 29px;
  height: 29px;
  border: 1px solid #aaa;
  border-radius: 50%;
  background: rgba(45, 48, 50, .9);
  font-size: 20px;
  line-height: 27px;
  text-align: center;
}

.small {
  height: 28px;
}

.small .start {
  width: 34px;
}

.small .view {
  width: 36px;
}

.small .i-win,
.small .i-view {
  width: 12px;
  height: 12px;
}

.small .i-ring {
  width: 14px;
  height: 14px;
}

.small .task {
  width: 35px;
}

.small .task svg {
  width: 18px;
  height: 18px;
}

.small .task.open::after {
  left: 3px;
  right: 3px;
  height: 2px;
}

.small .task.active {
  background: linear-gradient(to right, #4d5154 32px, #3a3e41 32px);
}

.small .task.active::after {
  left: 0;
  right: 0;
}

.small .clock {
  width: 50px;
  font-size: 8px;
  line-height: 13px;
}

/* file explorer */
.explorer {
  position: absolute;
  left: 21.4%;
  top: 148px;
  width: 799px;
  height: 420px;
  display: flex;
  flex-direction: column;
  background: #fff;
  color: #222;
  font-size: 8px;
  line-height: 15px;
  outline: 1px solid #3a3d40;
  box-shadow: 0 3px 12px rgba(0, 0, 0, .5);
}

.pi {
  width: 11px;
  height: 11px;
}

.ex-title {
  display: flex;
  align-items: center;
  gap: 5px;
  height: 21px;
  padding: 0 12px 0 8px;
}

.ex-title .bar {
  width: 1px;
  height: 11px;
  background: #888;
}

.ex-title .qa {
  width: 8px;
  height: 8px;
}

.ex-title h2 {
  font-size: 8px;
  color: #999;
}

.win-controls {
  display: flex;
  gap: 23px;
  margin-left: auto;
}

.win-controls svg {
  width: 9px;
  height: 9px;
}

.ex-tabs {
  display: flex;
  align-items: center;
  height: 17px;
  padding-right: 3px;
  border-bottom: 1px solid #dadbdc;
  color: #444;
}

.ex-tabs button {
  width: 38px;
  height: 16px;
}

.ex-tabs .on {
  width: 40px;
  background: #1979ca;
  color: #fff;
}

.chev {
  width: 8px;
  height: 8px;
  margin: 0 8px 0 auto;
}

.help {
  width: 9px;
  height: 9px;
  border-radius: 50%;
  background: #0078d7;
  color: #fff;
  line-height: 9px;
  text-align: center;
}

.ex-address {
  display: flex;
  align-items: center;
  height: 28px;
  padding-right: 8px;
  border-bottom: 1px solid #b8b8b8;
}

.ex-arrows {
  display: flex;
  gap: 8px;
  width: 76px;
  padding-left: 8px;
}

.ex-arrows svg {
  width: 10px;
  height: 10px;
}

.path {
  display: flex;
  align-items: center;
  flex: 1;
  height: 16px;
  border: 1px solid #d9d9d9;
  white-space: nowrap;
}

.path .pi {
  margin-right: 2px;
}

.path a {
  color: inherit;
  text-decoration: none;
  margin: 0 4px;
}

.path .sep {
  width: 8px;
  height: 8px;
}

.path-open {
  width: 8px;
  height: 8px;
  margin: 0 3px 0 auto;
}

.reload {
  display: flex;
  align-items: center;
  justify-content: center;
  width: 13px;
  height: 14px;
  border-left: 1px solid #d9d9d9;
}

.reload svg {
  width: 9px;
  height: 9px;
}

.find {
  display: flex;
  align-items: center;
  width: 70px;
  height: 16px;
  margin-left: 9px;
  padding: 0 5px;
  border: 1px solid #d9d9d9;
}

.find input {
  flex: 1;
  min-width: 0;
}

.find input::placeholder {
  color: #6d6d6d;
  opacity: 1;
}

.find svg {
  width: 9px;
  height: 9px;
}

.ex-body {
  display: flex;
  flex: 1;
  min-height: 0;
}

.places {
  width: 114px;
  padding-top: 11px;
  border-right: 1px solid #ececec;
}

.places li {
  display: flex;
  align-items: center;
  gap: 3px;
  width: 111px;
  height: 17px;
  padding-left: 18px;
  white-space: nowrap;
}

.places .lv2 {
  padding-left: 24px;
}

.places .gap {
  margin-top: 6px;
}

.places .current {
  background: #d9d9d9;
}

.places span {
  flex: 1;
  min-width: 0;
}

.places .pin {
  width: 8px;
  height: 8px;
  margin-right: 2px;
}

.listing {
  flex: 1;
}

table {
  border-collapse: collapse;
  table-layout: fixed;
  width: 422px;
}

.c-name {
  width: 194px;
}

.c-date,
.c-type {
  width: 86px;
}

.c-size {
  width: 56px;
}

th {
  position: relative;
  height: 18px;
  padding: 0 0 0 4px;
  border-right: 1px solid #e2e2e2;
  color: #44597a;
  font-weight: 400;
  text-align: left;
}

th.sorted {
  padding-left: 12px;
}

th svg {
  position: absolute;
  left: 96px;
  top: 0;
  width: 8px;
  height: 4px;
}

thead::after {
  content: "";
  display: block;
  height: 4px;
}

td {
  height: 15px;
  padding: 0 0 0 4px;
  color: #6d6d6d;
  white-space: nowrap;
}

.f-name {
  display: flex;
  align-items: center;
  gap: 4px;
  padding-left: 15px;
  color: #222;
}

.f-name svg {
  width: 8px;
  height: 10px;
}

.f-size {
  padding-right: 5px;
  text-align: right;
}

.ex-status {
  display: flex;
  align-items: center;
  justify-content: space-between;
  height: 17px;
  padding: 0 5px 0 10px;
  color: #33475f;
}

.ex-status span {
  width: 52px;
  border-right: 1px solid #e4e4e4;
}

.views {
  display: flex;
  gap: 1px;
}

.views button {
  display: flex;
  align-items: center;
  justify-content: center;
  width: 15px;
  height: 16px;
}

.views .on {
  background: #cbe8f6;
  border: 1px solid #26a0da;
}

.views svg {
  width: 11px;
  height: 11px;
}
</style>
